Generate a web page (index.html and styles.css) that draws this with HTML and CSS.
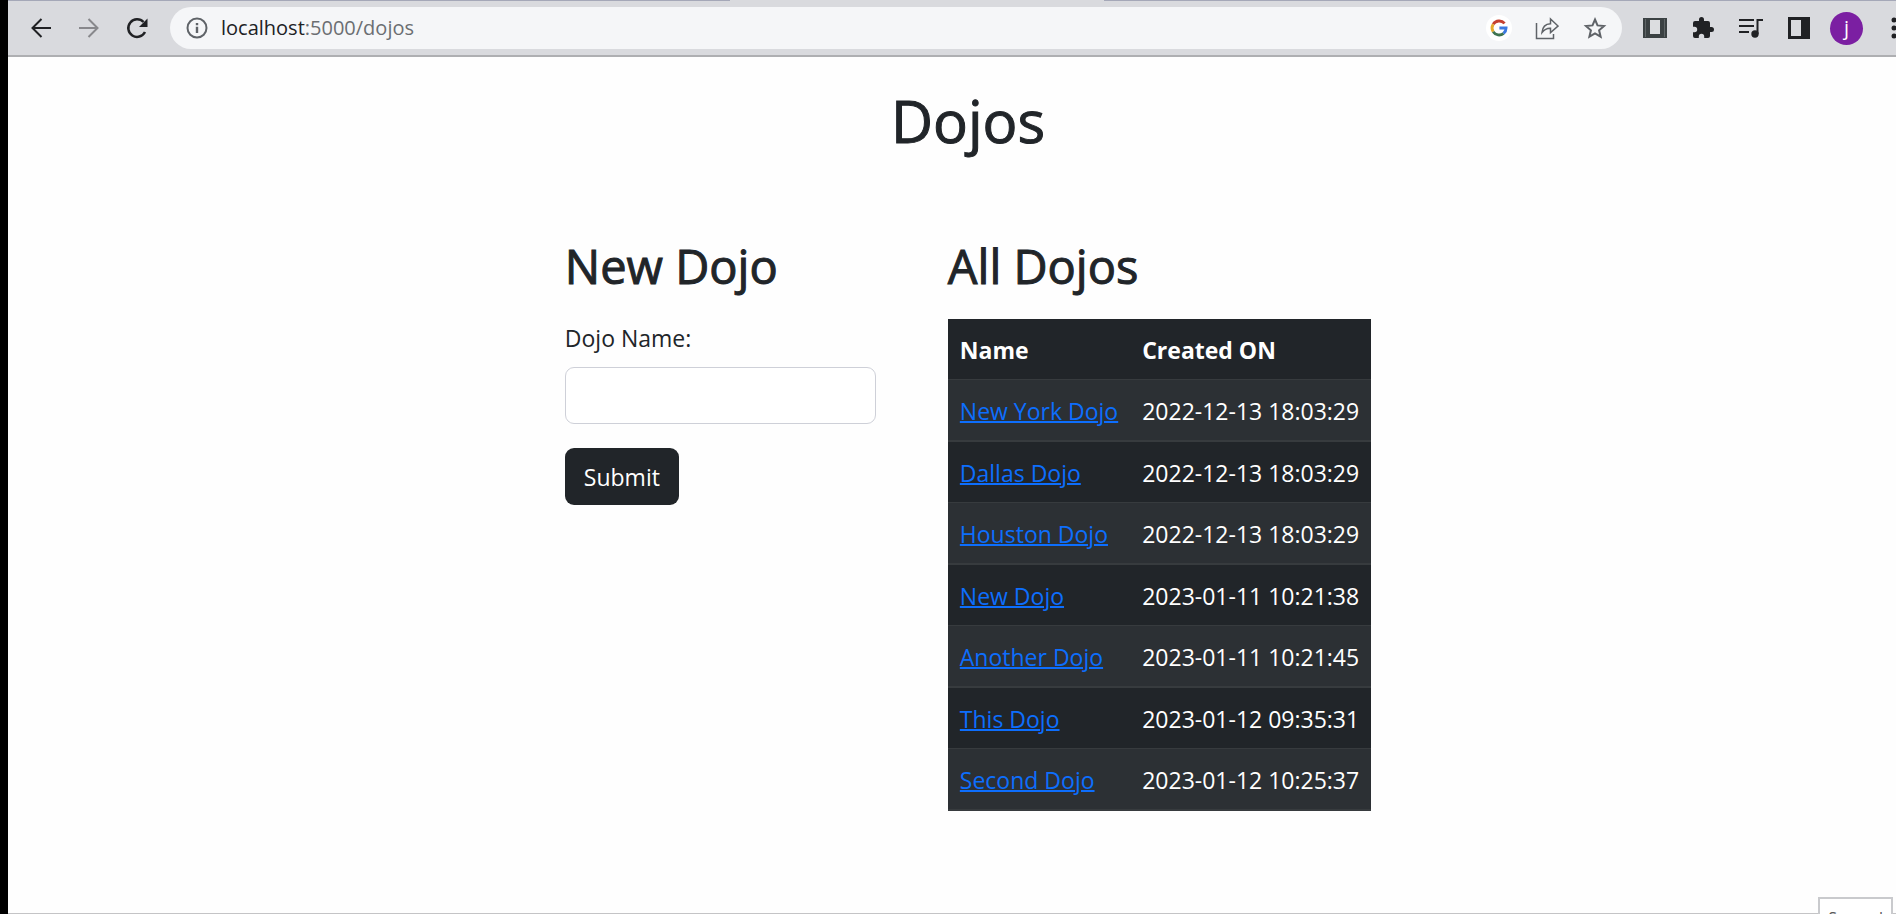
FILE: index.html
```html
<!DOCTYPE html>
<html lang="en">
<head>
<meta charset="utf-8">
<title>Dojos</title>
<link rel="stylesheet" href="styles.css">
</head>
<body>
<header class="toolbar">
  <span class="active-tab"></span>
  <nav class="nav">
    <button class="icon" aria-label="Back"><svg viewBox="0 0 24 24"><path d="M22 12H3.500M12.500 3 3.500 12l9 9" class="line"/></svg></button>
    <button class="icon dim" aria-label="Forward"><svg viewBox="0 0 24 24"><path d="M2 12h18.500M11.500 3l9 9-9 9" class="line"/></svg></button>
    <button class="icon" aria-label="Reload"><svg viewBox="0 0 24 24"><path d="M20 16a8.800 8.800 0 1 1-1.500-10" class="line thick"/><path d="M22.500 2.500v8.500h-8.500z"/></svg></button>
  </nav>
  <div class="address">
    <svg class="info" viewBox="0 0 24 24"><circle cx="12" cy="12" r="9.500" class="line"/><path d="M10.800 10.800h2.400V17h-2.400zM10.800 7h2.400v2.200h-2.400z"/></svg>
    <span class="url">localhost<span class="path">:5000/dojos</span></span>
    <button class="icon google" aria-label="Google"><svg viewBox="0 0 24 24"><g fill="none" stroke-width="3.400"><path d="M18.700 6.500A8.600 8.600 0 0 0 5 7.500" stroke="#c5402f"/><path d="M5 7.500a8.600 8.600 0 0 0 0 9" stroke="#e5ab2d"/><path d="M5 16.500a8.600 8.600 0 0 0 12.500 2" stroke="#3d7350"/><path d="M17.500 18.500c2-1.700 3-4 3-6.500H12.500" stroke="#3b78e0"/></g></svg></button>
    <button class="icon grey" aria-label="Share"><svg viewBox="0 0 24 24"><path d="M1.500 7v15.500h17V18M7 16.500C7.500 10.500 11 8 15.500 7.800V3L23 10l-7.500 6.500v-4.300C12 12 9.500 13.300 7 16.500z" class="line slim"/></svg></button>
    <button class="icon grey" aria-label="Bookmark"><svg viewBox="0 0 24 24"><path d="M12 3.500l2.500 5.900 6.500.6-4.900 4.300 1.500 6.400-5.600-3.400-5.600 3.400 1.500-6.400L3 10l6.500-.6z" class="line"/></svg></button>
  </div>
  <div class="tools">
    <button class="icon" aria-label="Reader extension"><svg viewBox="0 0 24 24"><path d="M0 2h24v20H0z" fill="#3b4143"/><path d="M7 4h10v14H7z" fill="#dcdde0"/><path d="M2.500 3v18M21.500 3v18" stroke="#5f6567" fill="none"/></svg></button>
    <button class="icon" aria-label="Extensions"><svg viewBox="0 0 24 24"><path d="M20.500 11H19V7a2 2 0 0 0-2-2h-4V3.500a2.500 2.500 0 0 0-5 0V5H4a2 2 0 0 0-2 2v3.800h1.500a2.700 2.700 0 0 1 0 5.400H2V20a2 2 0 0 0 2 2h3.800v-1.500a2.700 2.700 0 0 1 5.400 0V22H17a2 2 0 0 0 2-2v-4h1.500a2.500 2.500 0 0 0 0-5z"/></svg></button>
    <button class="icon" aria-label="Media"><svg viewBox="0 0 24 24"><path d="M0 4h15M0 10h15M0 16h10M18.500 18V4H24" class="line"/><circle cx="16" cy="18" r="3.700"/></svg></button>
    <button class="icon" aria-label="Side panel"><svg viewBox="0 0 24 24"><path d="M1 1h22v22H1zM4 4v16h10V4z" fill-rule="evenodd"/></svg></button>
    <button class="avatar" aria-label="Profile">j</button>
    <button class="icon" aria-label="Menu"><svg viewBox="0 0 24 24"><circle cx="12" cy="4" r="2.500"/><circle cx="12" cy="12" r="2.500"/><circle cx="12" cy="20" r="2.500"/></svg></button>
  </div>
</header>
<main class="page">
  <h1>Dojos</h1>
  <div class="columns">
    <form class="new-dojo">
      <h2>New Dojo</h2>
      <label for="name">Dojo Name:</label>
      <input id="name" type="text">
      <button class="submit" type="button">Submit</button>
    </form>
    <section>
      <h2>All Dojos</h2>
      <table>
        <thead><tr><th>Name</th><th>Created ON</th></tr></thead>
        <tbody>
          <tr><td><a href="#">New York Dojo</a></td><td>2022-12-13 18:03:29</td></tr>
          <tr><td><a href="#">Dallas Dojo</a></td><td>2022-12-13 18:03:29</td></tr>
          <tr><td><a href="#">Houston Dojo</a></td><td>2022-12-13 18:03:29</td></tr>
          <tr><td><a href="#">New Dojo</a></td><td>2023-01-11 10:21:38</td></tr>
          <tr><td><a href="#">Another Dojo</a></td><td>2023-01-11 10:21:45</td></tr>
          <tr><td><a href="#">This Dojo</a></td><td>2023-01-12 09:35:31</td></tr>
          <tr><td><a href="#">Second Dojo</a></td><td>2023-01-12 10:25:37</td></tr>
        </tbody>
      </table>
    </section>
  </div>
</main>
<div class="tooltip">Second</div>
</body>
</html>
```
FILE: styles.css
```css
* { box-sizing: border-box; }
body {
  margin: 0;
  height: 100vh;
  overflow: hidden;
  position: relative;
  display: flex;
  flex-direction: column;
  border-left: 8px solid #000;
  background: #fefefe;
  color: #212529;
  font: 23px/36px "Open Sans", "Noto Sans", sans-serif;
}
button { font: inherit; border: 0; padding: 0; background: none; color: inherit; }

.toolbar {
  position: relative;
  display: flex;
  align-items: center;
  height: 57px;
  padding-left: 20px;
  border-top: 1px solid #a5a8b8;
  border-bottom: 2px solid #aeafb2;
  background: #d9dade;
  color: #202124;
}
.active-tab {
  position: absolute;
  top: -1px;
  left: 722px;
  width: 374px;
  height: 1px;
  background: #d9dade;
}
.nav { display: flex; gap: 22px; }
.icon { flex: none; width: 26px; height: 26px; display: grid; place-items: center; }
svg { display: block; width: 24px; height: 24px; fill: currentColor; }
.line { fill: none; stroke: currentColor; stroke-width: 2; }
.thick { stroke-width: 2.5; }
.slim { stroke-width: 1.5; }
.dim { color: #88888c; }
.grey { color: #5f6368; }
.address {
  flex: 1;
  display: flex;
  align-items: center;
  gap: 22px;
  height: 42px;
  margin-left: 20px;
  padding: 0 14px 0 15px;
  border-radius: 21px;
  background: #f5f6f8;
}
.info { color: #5f6368; }
.url { flex: 1; margin-left: -10px; font-size: 20px; color: #202124; }
.path { color: #6b6e72; }
.google { border-radius: 50%; background: #fff; }
.google svg { width: 20px; height: 20px; }
.tools { display: flex; align-items: center; gap: 22px; margin: 0 -11px 0 20px; }
.avatar {
  width: 33px;
  height: 33px;
  margin: 0 -4px;
  border-radius: 50%;
  background: #7b1fa2;
  color: #fff;
  font-size: 20px;
  line-height: 32px;
}

.page {
  flex: 1;
  padding: 28px 0 0 32px;
  border-bottom: 1px solid #c4c4c6;
}
h1, h2 { margin: 0; font-weight: 500; -webkit-text-stroke: 1px currentColor; }
h1 { font-size: 58px; line-height: 72px; text-align: center; }
h2 { font-size: 47px; line-height: 58px; margin-bottom: 24px; }
.columns { display: flex; justify-content: center; gap: 72px; margin-top: 80px; }
.new-dojo { display: flex; flex-direction: column; width: 311px; }
label { margin: 1px 0 11px; }
input {
  width: 100%;
  height: 57px;
  padding: 8px 18px;
  border: 1px solid #ced0d8;
  border-radius: 9px;
  background: #fff;
  font: inherit;
}
.submit {
  align-self: flex-start;
  margin-top: 24px;
  padding: 11px 19px 10px;
  border-radius: 9px;
  background: #212529;
  color: #fff;
}
table { border-collapse: separate; border-spacing: 0; background: #212529; color: #fff; }
th, td { padding: 13px 12px 11px; text-align: left; border-bottom: 1px solid #373b3e; }
th { font-weight: 700; }
tbody tr:nth-child(odd) td { border-bottom-width: 2px; background: #2c3034; }
a { color: #0d6efd; text-decoration-thickness: 2px; }

.tooltip {
  position: absolute;
  right: 3px;
  bottom: -25px;
  padding: 9px 8px;
  border: 2px solid #c9cacd;
  background: #fff;
  color: #575757;
  font-size: 16px;
  line-height: 20px;
}
```
